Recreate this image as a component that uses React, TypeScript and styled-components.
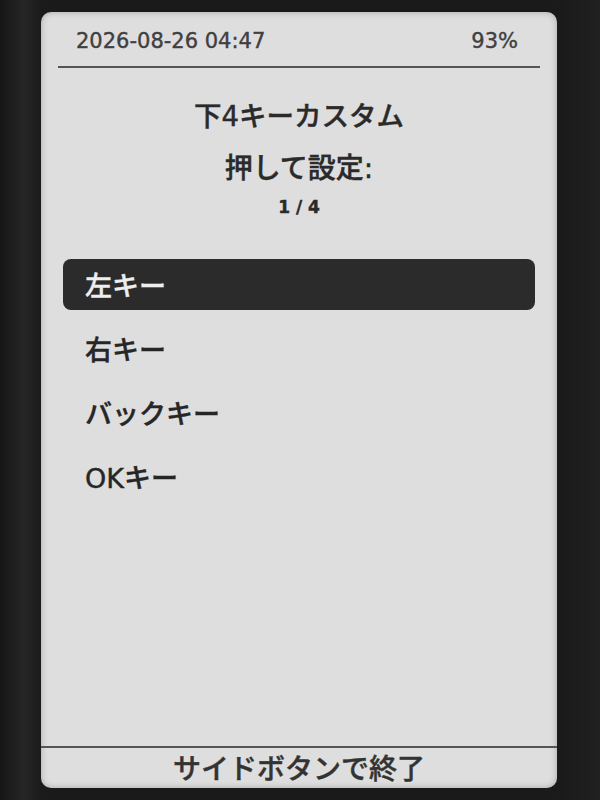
import React from "react";
import styled, { createGlobalStyle } from "styled-components";

const Global = createGlobalStyle`
  html, body {
    margin: 0;
    padding: 0;
    background: #1c1c1c;
  }
  body {
    font-family: "DejaVu Sans", "Noto Sans CJK JP", sans-serif;
    -webkit-text-stroke: 0.4px currentColor;
  }
`;

const Bezel = styled.div`
  width: 600px;
  height: 800px;
  box-sizing: border-box;
  padding: 12px 43px 12px 41px;
  background: linear-gradient(90deg, #161616 0%, #262626 4%, #1a1a1a 7%, #1a1a1a 93%, #202020 100%);
`;

const Screen = styled.div`
  height: 100%;
  background: #dedede;
  border-radius: 10px;
  display: flex;
  flex-direction: column;
  overflow: hidden;
  box-shadow: inset 0 0 6px rgba(0, 0, 0, 0.25);
`;

const StatusBar = styled.div`
  height: 56px;
  margin: 0 17px;
  padding: 4px 22px 0 18px;
  box-sizing: border-box;
  display: flex;
  align-items: center;
  justify-content: space-between;
  border-bottom: 2px solid #555;
  font-size: 21px;
  color: #404040;
`;

const Title = styled.div<{ $size: number; $gap: number; $line: number; $bold?: boolean }>`
  text-align: center;
  font-size: ${(p) => p.$size}px;
  line-height: ${(p) => p.$line}px;
  margin-top: ${(p) => p.$gap}px;
  font-weight: ${(p) => (p.$bold ? 700 : 500)};
  color: #2a2a2a;
`;

const Menu = styled.div`
  margin: 41px 22px 0;
  display: flex;
  flex-direction: column;
  gap: 13px;
`;

const Item = styled.div<{ $active?: boolean }>`
  height: 51px;
  display: flex;
  align-items: center;
  padding-left: 22px;
  border-radius: 8px;
  font-size: 27px;
  font-weight: 500;
  background: ${(p) => (p.$active ? "#2b2b2b" : "transparent")};
  color: ${(p) => (p.$active ? "#eeeeee" : "#262626")};
`;

const Footer = styled.div`
  margin-top: auto;
  height: 42px;
  padding-bottom: 2px;
  box-sizing: border-box;
  border-top: 2px solid #555;
  display: flex;
  align-items: center;
  justify-content: center;
  font-size: 28px;
  font-weight: 500;
  color: #333;
`;

const items = ["左キー", "右キー", "バックキー", "OKキー"];

export default function App() {
  return (
    <>
      <Global />
      <Bezel>
        <Screen>
          <StatusBar>
            <span>2026-08-26 04:47</span>
            <span>93%</span>
          </StatusBar>
          <Title $size={27.5} $gap={30} $line={36}>
            下4キーカスタム
          </Title>
          <Title $size={28} $gap={17} $line={36}>
            押して設定:
          </Title>
          <Title $size={17} $gap={9} $line={22} $bold>
            1 / 4
          </Title>
          <Menu>
            {items.map((label, i) => (
              <Item key={label} $active={i === 0}>
                {label}
              </Item>
            ))}
          </Menu>
          <Footer>サイドボタンで終了</Footer>
        </Screen>
      </Bezel>
    </>
  );
}
